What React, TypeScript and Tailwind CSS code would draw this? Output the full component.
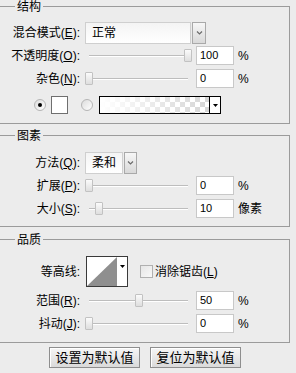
import React from 'react';

const FONT = "font-['Liberation_Sans','Noto_Sans_CJK_SC',sans-serif]";

function Label({ text, k }: { text: string; k?: string }) {
  return (
    <div className="w-[80px] shrink-0 text-right text-[12px] leading-[14px] whitespace-nowrap">
      {text}
      {k ? (
        <>
          (<span className="underline underline-offset-1">{k}</span>)
        </>
      ) : null}
      :
    </div>
  );
}

function Chevron() {
  return (
    <svg width="7" height="4" viewBox="0 0 7 4">
      <path d="M1 0.5 L3.5 3 L6 0.5" stroke="#6b6b6b" strokeWidth="1.2" fill="none" />
    </svg>
  );
}

function Select({ value, width, btn }: { value: string; width: string; btn: string }) {
  return (
    <div className="flex ml-[5px]">
      <div className={`${width} h-[22px] border border-[#cfcfcf] bg-gradient-to-b from-[#f4f4f4] to-white flex items-center pl-[6px] text-[12px]`}>
        {value}
      </div>
      <div className={`${btn} ml-[1px] h-[22px] border border-[#a9a9a9] bg-gradient-to-b from-[#f7f7f7] to-[#d9d9d9] flex items-center justify-center`}>
        <Chevron />
      </div>
    </div>
  );
}

function Slider({ value }: { value: number }) {
  return (
    <div className="relative ml-[5px] w-[107px] h-[14px] shrink-0">
      <div className="absolute left-[4px] right-[4px] top-[6px] h-[2px] bg-[#bdbdbd] border-b border-white" />
      <div
        className="absolute top-0 w-[8px] h-[13px] border border-[#c2c2c2] bg-gradient-to-b from-[#fbfbfb] to-[#dedede] rounded-[1px]"
        style={{ left: Math.round(value * 0.99) }}
      />
    </div>
  );
}

function NumBox({ value, unit }: { value: string; unit: string }) {
  return (
    <>
      <div className="ml-[4px] w-[38px] h-[19px] border border-[#c8c8c8] bg-white flex items-center pl-[3px] font-['Liberation_Sans'] text-[11px]">
        {value}
      </div>
      <div className="ml-[4px] text-[12px]">{unit}</div>
    </>
  );
}

function SliderRow({ text, k, value, unit, cls }: { text: string; k: string; value: number; unit: string; cls: string }) {
  return (
    <div className={`flex items-center h-[19px] ${cls}`}>
      <Label text={text} k={k} />
      <Slider value={value} />
      <NumBox value={String(value)} unit={unit} />
    </div>
  );
}

function Group({ title, h, cls, children }: { title: string; h: string; cls: string; children: React.ReactNode }) {
  return (
    <div className={`relative w-[290px] ${h} ${cls} border-t border-r border-b border-[#9b9b9b]`}>
      <span className="absolute -top-[6px] left-[15px] px-[2px] bg-[#ececec] text-[12px] leading-[12px]">{title}</span>
      {children}
    </div>
  );
}

function Radio({ checked }: { checked?: boolean }) {
  return (
    <div className="w-[12px] h-[12px] rounded-full border border-[#b5b5b5] bg-gradient-to-br from-[#dcdcdc] to-white flex items-center justify-center shrink-0">
      {checked ? <div className="w-[4px] h-[4px] rounded-full bg-black" /> : null}
    </div>
  );
}

function Btn({ children }: { children: React.ReactNode }) {
  return (
    <div className="w-[91px] h-[21px] border border-[#8e8e8e] bg-gradient-to-b from-[#f6f6f6] to-[#dadada] shadow-[inset_1px_1px_0_#ffffff] flex items-center justify-center text-[13px] leading-none">
      {children}
    </div>
  );
}

export default function App() {
  return (
    <div className={`w-[296px] h-[373px] overflow-hidden bg-[#ececec] text-black pt-[6px] ${FONT}`}>
      <Group title="结构" h="h-[118px]" cls="pt-[15px]">
        <div className="flex items-center h-[22px]">
          <Label text="混合模式" k="E" />
          <Select value="正常" width="w-[106px]" btn="w-[14px]" />
        </div>
        <SliderRow text="不透明度" k="O" value={100} unit="%" cls="mt-[2px]" />
        <SliderRow text="杂色" k="N" value={0} unit="%" cls="mt-[4px]" />
        <div className="flex items-center h-[18px] mt-[8px] pl-[34px]">
          <Radio checked />
          <div className="ml-[5px] w-[17px] h-[18px] border border-[#6f6f6f] bg-white" />
          <div className="ml-[13px]">
            <Radio />
          </div>
          <div className="ml-[6px] w-[122px] h-[18px] border border-black flex">
            <div className="relative flex-1 bg-[repeating-conic-gradient(#d6d6d6_0_25%,#ffffff_0_50%)] bg-[length:10px_10px]">
              <div className="absolute inset-0 bg-gradient-to-r from-white to-white/0" />
            </div>
            <div className="w-[11px] border-l border-black bg-white flex items-center justify-center">
              <svg width="5" height="3" viewBox="0 0 5 3">
                <path d="M0 0 H5 L2.5 3 Z" fill="#000" />
              </svg>
            </div>
          </div>
        </div>
      </Group>

      <Group title="图素" h="h-[92px]" cls="mt-[11px] pt-[16px]">
        <div className="flex items-center h-[22px]">
          <Label text="方法" k="Q" />
          <Select value="柔和" width="w-[38px]" btn="w-[13px]" />
        </div>
        <SliderRow text="扩展" k="P" value={0} unit="%" cls="mt-[2px]" />
        <SliderRow text="大小" k="S" value={10} unit="像素" cls="mt-[4px]" />
      </Group>

      <Group title="品质" h="h-[104px]" cls="mt-[12px] pt-[16px]">
        <div className="flex items-center h-[31px]">
          <Label text="等高线" />
          <div className="ml-[6px] w-[42px] h-[31px] border border-[#3a3a3a] bg-white flex">
            <svg width="30" height="29" viewBox="0 0 30 29" className="block">
              <polygon points="0,29 30,0 30,29" fill="#8f8f8f" />
            </svg>
            <div className="flex-1 flex justify-center pt-[8px]">
              <svg width="5" height="3" viewBox="0 0 5 3">
                <path d="M0 0 H5 L2.5 3 Z" fill="#000" />
              </svg>
            </div>
          </div>
          <div className="ml-[12px] w-[13px] h-[13px] border border-[#b0b0b0] bg-gradient-to-br from-[#e6e6e6] to-[#f8f8f8]" />
          <div className="ml-[2px] text-[12px] whitespace-nowrap">
            消除锯齿(<span className="underline underline-offset-1">L</span>)
          </div>
        </div>
        <SliderRow text="范围" k="R" value={50} unit="%" cls="mt-[4px]" />
        <SliderRow text="抖动" k="J" value={0} unit="%" cls="mt-[4px]" />
      </Group>

      <div className="flex gap-[10px] pl-[49px] mt-[4px]">
        <Btn>设置为默认值</Btn>
        <Btn>复位为默认值</Btn>
      </div>
    </div>
  );
}
